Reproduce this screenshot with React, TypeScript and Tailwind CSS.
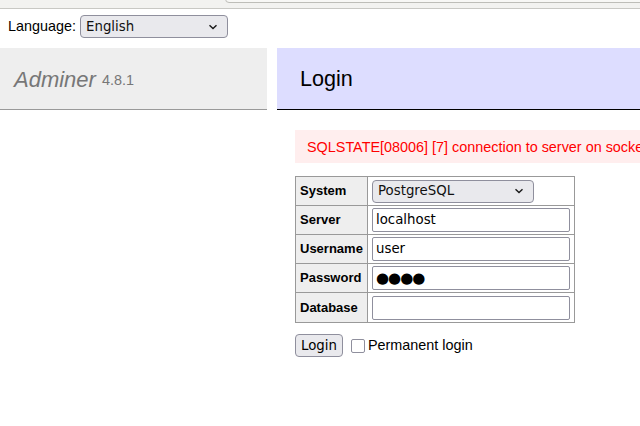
import React from "react";

const ctrl = { fontFamily: '"DejaVu Sans", sans-serif' };

function Chevron() {
  return (
    <svg width="10" height="6" viewBox="0 0 10 6" className="shrink-0">
      <path d="M1.5 1.2 L5 4.6 L8.5 1.2" fill="none" stroke="#1a1a1a" strokeWidth="1.4" />
    </svg>
  );
}

function Select({ label, w }: { label: string; w: string }) {
  return (
    <div
      className={`${w} h-[23px] flex items-center justify-between pl-[5px] pr-[9px] bg-[#e9e9ed] border border-[#8f8f9d] rounded-[4px] text-[13.33px] text-[#111]`}
      style={ctrl}
    >
      <span>{label}</span>
      <Chevron />
    </div>
  );
}

function Field({ value, big }: { value: string; big?: boolean }) {
  return (
    <div
      className={`w-[198px] h-[24px] flex items-center px-[3px] bg-white border border-[#8f8f9d] rounded-[2px] ${big ? "text-[15px] tracking-[-1px]" : "text-[13.33px]"} text-black`}
      style={ctrl}
    >
      {value}
    </div>
  );
}

function Row({ label, children, h }: { label: string; children: React.ReactNode; h?: string }) {
  return (
    <tr className={h ?? "h-[29px]"}>
      <th className="w-[72px] border border-[#999] bg-[#eee] text-left font-bold text-[13px] pl-[4px] align-middle">
        {label}
      </th>
      <td className="w-[207px] border border-[#999] pl-[4px] align-middle">{children}</td>
    </tr>
  );
}

export default function App() {
  return (
    <div
      className="w-[640px] h-[426px] overflow-hidden bg-white text-black"
      style={{ fontFamily: '"Liberation Sans", Arial, sans-serif' }}
    >
      <div className="relative h-[9px] bg-[#f2f2f0] border-b border-[#c8c8c4] overflow-hidden">
        <div className="absolute left-[225px] top-[-12px] w-[440px] h-[15px] bg-[#f7f7f5] border border-[#bdbdb8] rounded-[4px]" />
      </div>
      <div className="h-[39px] flex items-start pt-[6px] pl-[8px] gap-[4px] text-[14.4px]">
        <span className="leading-[23px]">Language:</span>
        <Select label="English" w="w-[148px]" />
      </div>
      <div className="flex items-start">
        <div className="w-[267px] shrink-0">
          <div className="h-[62px] bg-[#eee] border-b border-[#999] flex items-center pl-[14px] pt-[1px]">
            <span className="italic text-[22px] text-[#777]">Adminer</span>
            <span className="text-[14.4px] text-[#777] ml-[6px] mt-[3px]">4.8.1</span>
          </div>
        </div>
        <div className="ml-[10px] flex-1 min-w-0">
          <div className="h-[62px] bg-[#ddf] border-b border-black flex items-center pl-[23px] pt-[1px]">
            <span className="text-[21.6px]">Login</span>
          </div>
          <div className="ml-[18px] mt-[20px] h-[33px] bg-[#fee] text-[#f00] flex items-center pl-[12px] pt-[2px] text-[14.4px] whitespace-nowrap overflow-hidden">
            SQLSTATE[08006] [7] connection to server on socket "/var/run/postgresql/.s.PGSQL.5432" failed
          </div>
          <table className="ml-[18px] mt-[13px] border-collapse border border-[#999]">
            <tbody>
              <Row label="System">
                <Select label="PostgreSQL" w="w-[162px]" />
              </Row>
              <Row label="Server">
                <Field value="localhost" />
              </Row>
              <Row label="Username">
                <Field value="user" />
              </Row>
              <Row label="Password">
                <Field value="●●●●" big />
              </Row>
              <Row label="Database" h="h-[30px]">
                <Field value="" />
              </Row>
            </tbody>
          </table>
          <div className="ml-[18px] mt-[11px] flex items-center">
            <div
              className="h-[23px] px-[5px] flex items-center bg-[#e9e9ed] border border-[#8f8f9d] rounded-[4px] text-[13.33px]"
              style={ctrl}
            >
              Login
            </div>
            <div className="ml-[8px] w-[14px] h-[14px] border border-[#8f8f9d] rounded-[2px] bg-white" />
            <span className="ml-[3px] text-[14.4px]">Permanent login</span>
          </div>
        </div>
      </div>
    </div>
  );
}
